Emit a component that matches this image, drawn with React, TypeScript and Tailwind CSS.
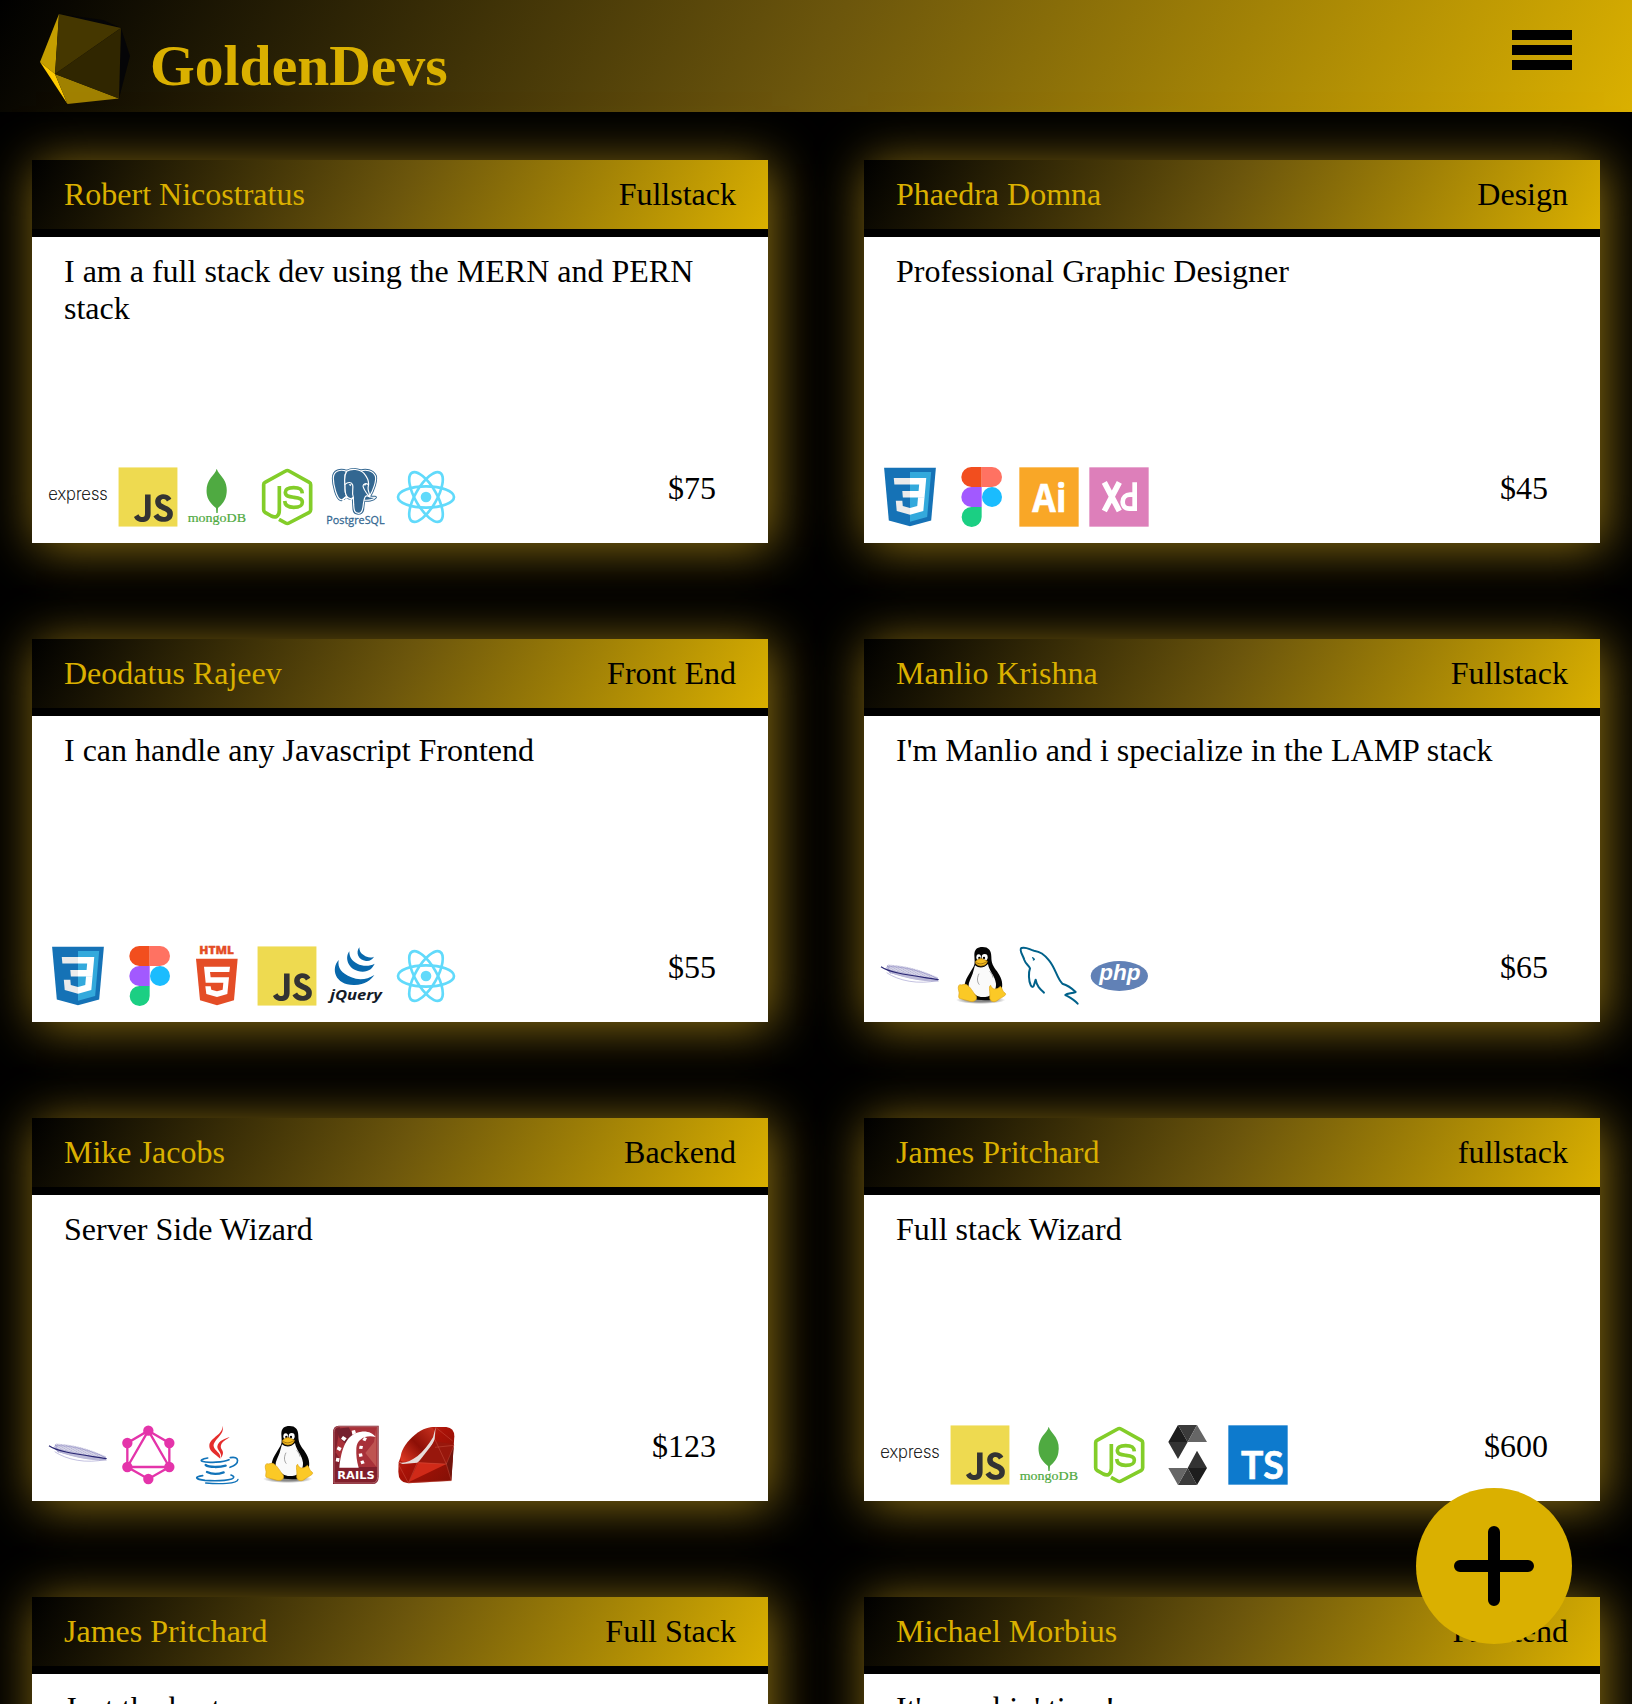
import React from 'react';
import { SiJavascript } from 'react-icons/si';

type SvgProps = { children: React.ReactNode; viewBox?: string };

function Glyph({ children, viewBox = '0 0 180 180' }: SvgProps) {
  return (
    <svg viewBox={viewBox} className="h-[60px] w-[60px] shrink-0 overflow-visible">
      {children}
    </svg>
  );
}

function Express() {
  return (
    <Glyph>
      <text x="1" y="98" fontFamily="Inter" fontWeight="200" fontSize="53" textLength="178" lengthAdjust="spacingAndGlyphs" fill="#000" stroke="#000" strokeWidth="0.6">express</text>
    </Glyph>
  );
}

function JavaScript() {
  return (
    <Glyph>
      <rect x="3" y="3" width="174" height="174" fill="#333" />
      <SiJavascript x="1" y="1" size={178} color="#eeda50" />
    </Glyph>
  );
}

function MongoDB() {
  return (
    <Glyph>
      <path fill="#4faa41" d="M89 5C93 17 101 23 110 37C119 51 121 68 118 83C115 101 104 113 93 123L92 138H88L87 123C75 113 64 103 60 85C56 64 61 47 71 33C78 23 87 15 89 5Z" />
      <text x="2" y="165" fontFamily="Liberation Serif" fontSize="38" textLength="175" lengthAdjust="spacingAndGlyphs" fill="#4faa41" stroke="#4faa41" strokeWidth="0.6">mongoDB</text>
    </Glyph>
  );
}

function NodeJs() {
  return (
    <Glyph>
      <g fill="none" stroke="#83cd29" strokeWidth="11" strokeLinejoin="round">
        <path d="M67 57V130C67 149 55 153 43 147L24 136Q20 133 20 128V53Q20 48 24 46L86 12Q91 9 96 12L157 46Q161 48 161 53V128Q161 133 157 136L96 168Q91 171 86 168L66 157" />
        <path d="M136 79C135 65 126 62 110 62C93 62 85 67 85 76C85 88 96 89 111 91C129 93 136 96 136 106C136 118 127 121 110 121C92 121 84 115 83 102" />
      </g>
    </Glyph>
  );
}

function Postgres() {
  return (
    <Glyph>
      <g fill="#336791" stroke="#336791" strokeWidth="9" strokeLinejoin="round">
        <path d="M62 13C44 6 22 10 22 34C22 54 32 94 44 98C50 100 57 92 62 87C70 96 77 95 82 95L84 128C86 143 107 142 110 128L113 99C125 101 142 99 148 91C141 91 134 91 130 89C142 70 152 40 148 27C140 10 119 7 105 12C93 7 76 6 62 13Z" />
      </g>
      <g fill="#336791" stroke="#fff" strokeWidth="3.5" strokeLinejoin="round" strokeLinecap="round">
        <path d="M62 13C44 6 22 10 22 34C22 54 32 94 44 98C50 100 57 92 62 87C55 77 58 64 57 54C55 38 54 25 62 13Z" />
        <path d="M105 12C119 7 140 10 148 27C152 40 142 70 130 89C134 91 141 91 148 91C142 99 125 101 113 99" />
        <path d="M62 13C76 4 101 5 114 19C124 31 130 45 127 57C123 73 133 77 130 89C115 80 114 99 112 111C111 126 109 139 98 139C83 139 84 124 83 113L82 91C76 96 66 96 62 87C55 77 58 64 57 54C55 38 54 25 62 13Z" />
        <path fill="none" d="M57 52C66 44 77 45 80 54C83 67 76 77 82 91M66 91C60 91 53 94 50 100C61 105 75 102 82 92M127 53C120 47 112 50 111 57C113 69 122 79 130 89" />
        <path fill="#fff" stroke="none" d="M68 52l9 0-4 6zM113 52l8-1-4 6z" />
      </g>
      <text x="1" y="170" fontFamily="Open Sans" fontSize="34" textLength="175" lengthAdjust="spacingAndGlyphs" fill="#336791" stroke="#336791" strokeWidth="0.8">PostgreSQL</text>
    </Glyph>
  );
}

function ReactLogo() {
  return (
    <Glyph>
      <g fill="none" stroke="#61dafb" strokeWidth="8">
        <ellipse cx="90" cy="90" rx="84" ry="32" />
        <ellipse cx="90" cy="90" rx="84" ry="32" transform="rotate(60 90 90)" />
        <ellipse cx="90" cy="90" rx="84" ry="32" transform="rotate(120 90 90)" />
      </g>
      <circle cx="90" cy="90" r="16" fill="#61dafb" />
    </Glyph>
  );
}

function Css3() {
  return (
    <Glyph viewBox="0 0 128 128">
      <path fill="#1572b6" d="M18.814 114.123L8.76 1.352h110.48l-10.064 112.754-45.243 12.543z" />
      <path fill="#33a9dc" d="M64 117.062l36.559-10.136 8.601-96.354H64z" />
      <path fill="#fff" d="M64 51.429h18.302l1.264-14.163H64V23.435h34.682l-.332 3.711-3.4 38.114H64z" />
      <path fill="#ebebeb" d="M64.083 87.349l-.061.018-15.403-4.159-.985-11.031H33.752l1.937 21.717 28.331 7.863.063-.018z" />
      <path fill="#fff" d="M81.127 64.675l-1.666 18.522-15.426 4.164v14.39l28.354-7.858.208-2.337 2.406-26.881z" />
      <path fill="#ebebeb" d="M64.048 23.435v13.831H30.64l-.277-3.108-.63-7.012-.331-3.711zM64 51.431v13.831H48.792l-.277-3.108-.631-7.012-.33-3.711z" />
    </Glyph>
  );
}

function Figma() {
  return (
    <Glyph>
      <path fill="#f24e1e" d="M95 0H64a30 30 0 0 0 0 60h31z" />
      <path fill="#ff7262" d="M95 0h31a30 30 0 0 1 0 60H95z" />
      <path fill="#a259ff" d="M95 60H64a30 30 0 0 0 0 60h31z" />
      <circle cx="126" cy="90" r="30" fill="#1abcfe" />
      <path fill="#1bcf83" d="M95 120H64a30 30 0 1 0 31 30z" />
    </Glyph>
  );
}

function Illustrator() {
  return (
    <Glyph>
      <rect x="1" y="1" width="178" height="178" fill="#f9a727" />
      <text x="40" y="134" fontFamily="Open Sans" fontWeight="700" fontSize="119" textLength="102" lengthAdjust="spacingAndGlyphs" fill="#fff" stroke="#fff" strokeWidth="2">Ai</text>
    </Glyph>
  );
}

function AdobeXd() {
  return (
    <Glyph>
      <rect x="1" y="1" width="178" height="178" fill="#dd7fba" />
      <g fill="none" stroke="#fff">
        <path strokeWidth="17" d="M46 46L91 132M91 46L46 132" />
        <path strokeWidth="14" d="M137 46V125H121C106 125 101 115 101 105C101 91 110 83 123 83H137" />
      </g>
    </Glyph>
  );
}

function Html5() {
  return (
    <Glyph>
      <text x="37" y="25" fontFamily="Open Sans" fontWeight="800" fontSize="31" textLength="104" lengthAdjust="spacingAndGlyphs" fill="#e44d26" stroke="#e44d26" strokeWidth="1">HTML</text>
      <path fill="#e44d26" d="M27 38H152L141 163L90 178L39 163Z" />
      <path fill="#fff" d="M51 62H129L127 78H69L71 94H126L121 144L90 153L58 144L55 121H71L73 131L90 136L107 131L109 110H56Z" />
    </Glyph>
  );
}

function JQuery() {
  return (
    <Glyph>
      <g fill="#0868ac">
        <path d="M38 42C14 68 27 117 83 117C116 118 135 101 145 87C124 101 98 104 76 94C47 82 34 66 38 42Z" />
        <path d="M70 16C53 39 70 77 110 77C129 77 140 66 146 53C130 62 109 61 94 53C77 44 70 34 70 16Z" />
        <path d="M100 4C88 20 97 43 120 45C132 46 139 40 144 32C133 37 122 34 114 28C104 22 100 15 100 4Z" />
      </g>
      <text x="12" y="162" fontFamily="Open Sans" fontStyle="italic" fontWeight="700" fontSize="45" textLength="156" lengthAdjust="spacingAndGlyphs" fill="#131b28">jQuery</text>
    </Glyph>
  );
}

const barbs = Array.from({ length: 42 }, (_, i) => {
  const t = i / 41;
  const x = 18 + t * 150;
  const y = 68 + t * 32;
  const w = 6 + 13 * Math.sin(Math.PI * Math.min(1, t * 0.75 + 0.22));
  return `M${x} ${y}l${w * 0.55} ${-w * 0.85}M${x} ${y}l${w * 0.9} ${w * 0.95}`;
}).join('');

function Apache() {
  return (
    <Glyph>
      <path d={barbs} fill="none" stroke="#6f6bab" strokeWidth="1.5" />
      <path d="M22 62C65 60 126 75 174 98M20 80C55 104 115 117 174 103M22 58L32 83" fill="none" stroke="#8783c0" strokeWidth="1.5" />
      <path d="M3 62C30 81 86 87 176 101" fill="none" stroke="#282572" strokeWidth="3.5" />
    </Glyph>
  );
}

function Tux() {
  return (
    <Glyph>
      <defs>
        <radialGradient id="tux-shade"><stop offset="0.5" stopColor="#888" /><stop offset="1" stopColor="#888" stopOpacity="0" /></radialGradient>
      </defs>
      <ellipse cx="92" cy="162" rx="74" ry="12" fill="url(#tux-shade)" />
      <path fill="#050505" d="M73 27C73 10 82 3 98 3C115 3 124 13 124 32C124 51 129 60 141 76C153 94 159 108 156 126L145 158C126 164 83 165 66 157L44 125C43 105 53 92 61 78C69 66 75 57 74 46Z" />
      <path fill="#fafafa" d="M75 58C88 68 101 67 114 54C116 73 135 89 138 113C139 132 128 151 106 153C83 155 75 148 61 133C47 117 66 95 70 76Z" />
      <ellipse cx="86" cy="34" rx="7" ry="9" fill="#fff" /><ellipse cx="104" cy="34" rx="9" ry="10" fill="#fff" />
      <circle cx="88" cy="36" r="3.5" /><circle cx="102" cy="36" r="3.5" />
      <path fill="#f6bd20" stroke="#ad7708" strokeWidth="2" d="M76 47C82 41 89 37 96 38L112 45C112 56 98 62 88 59C81 57 75 53 76 47Z" />
      <path fill="none" stroke="#744e04" strokeWidth="2" d="M79 49C90 58 102 52 110 47" />
      <path fill="#fbc926" stroke="#dda316" strokeWidth="2" d="M29 116C39 119 42 112 50 116C62 123 68 138 78 149C84 161 73 168 60 166L28 157C23 153 30 142 26 134C24 125 24 120 29 116Z" />
      <path fill="#fbc926" stroke="#dda316" strokeWidth="2" d="M122 118C126 132 140 133 151 121C159 129 155 134 166 142C171 149 155 153 141 164C131 171 119 165 119 155C122 140 114 121 122 118Z" />
      <path fill="none" stroke="#777" strokeWidth="2" d="M87 83C79 99 83 110 88 116M119 76C124 82 128 87 129 95" />
    </Glyph>
  );
}

function MySql() {
  return (
    <Glyph>
      <g fill="none" stroke="#00618a" strokeWidth="6" strokeLinejoin="round" strokeLinecap="round">
        <path d="M176 173C166 161 154 155 139 147C145 141 158 143 170 138C158 126 145 117 130 113C113 95 110 67 90 43C74 24 64 17 45 14C31 11 22 1 7 6C-1 13 13 29 16 42C21 56 29 57 33 67C28 80 29 104 35 117C38 123 43 126 45 117L50 101C53 120 63 129 75 140" />
        <path d="M41 35L46 40L43 42" strokeWidth="4" />
      </g>
    </Glyph>
  );
}

function Php() {
  return (
    <Glyph>
      <ellipse cx="91" cy="90" rx="86" ry="45" fill="#6181b6" />
      <text x="31" y="102" fontFamily="Liberation Sans" fontStyle="italic" fontWeight="700" fontSize="66" textLength="124" lengthAdjust="spacingAndGlyphs" fill="#fff">php</text>
    </Glyph>
  );
}

const graphNodes = [[91, 17], [154, 54], [154, 126], [91, 162], [28, 126], [28, 54]];

function GraphQL() {
  return (
    <Glyph>
      <g fill="none" stroke="#e434aa" strokeWidth="7">
        <path d="M91 17L154 54V126L91 162L28 126V54ZM91 17L154 126H28Z" />
      </g>
      {graphNodes.map(([x, y]) => <circle key={`${x}-${y}`} cx={x} cy={y} r="15.5" fill="#e434aa" />)}
    </Glyph>
  );
}

function Java() {
  return (
    <Glyph>
      <g fill="#e52d2c">
        <path d="M106 2C116 28 78 43 80 64C82 78 103 83 100 101C83 86 65 78 67 60C70 37 110 28 106 2Z" />
        <path d="M128 37C108 49 99 57 102 69C105 76 114 83 102 98C105 83 90 76 91 64C94 47 117 39 128 37Z" />
      </g>
      <g fill="none" stroke="#1173b9" strokeLinecap="round" strokeLinejoin="round">
        <path strokeWidth="5" d="M62 99C45 102 39 106 45 109C62 115 112 111 126 104M130 98C157 92 161 116 129 127" />
        <path strokeWidth="7" d="M56 120C66 128 99 127 116 122M60 141C76 149 96 147 110 142" />
        <path strokeWidth="5" d="M47 152C20 155 25 163 54 166C93 169 140 166 140 157C141 153 135 151 132 150" />
        <path strokeWidth="4" d="M56 174C96 178 151 177 153 163" />
      </g>
    </Glyph>
  );
}

function Rails() {
  return (
    <Glyph>
      <path fill="#811f2c" d="M38 2H158V155Q158 177 139 177H21V23Q21 2 38 2Z" />
      <path fill="#a83139" d="M42 6H154V126H58L29 82Z" />
      <path fill="#75202e" d="M30 12L68 7L85 38L62 60L40 38Z" />
      <path fill="#c9675d" d="M151 7V125L118 84L144 51Z" opacity=".65" />
      <path fill="none" stroke="#c78788" strokeWidth="2" d="M39 5H155V154Q155 174 138 174H24V23Q24 5 39 5Z" />
      <path fill="#fff" d="M40 128C46 71 61 25 106 20C127 18 140 25 149 36C120 28 93 42 91 69C90 91 92 108 98 128Z" />
      <g fill="#fff"><path d="M31 98l10 2-2 11-10-2zM36 64l11 5-5 10-10-6zM51 33l11 7-7 9-10-8zM77 17l10-2 3 10-11 4zM115 36l8 4-5 9-9-4zM101 62l10 1-2 9-10-1zM98 86l10-1 2 9-10 2zM103 109l9-3 4 9-10 3z" /></g>
      <text x="34" y="161" fontFamily="DejaVu Sans" fontWeight="700" fontSize="33" textLength="112" lengthAdjust="spacingAndGlyphs" fill="#fff">RAILS</text>
    </Glyph>
  );
}

function Ruby() {
  return (
    <Glyph>
      <defs>
        <linearGradient id="ruby-face" x1="0" y1="0" x2="1" y2="1"><stop stopColor="#d83a26" /><stop offset=".45" stopColor="#a81207" /><stop offset="1" stopColor="#801006" /></linearGradient>
        <linearGradient id="ruby-table" x1="0" y1="1" x2="1" y2="0"><stop stopColor="#e33b25" /><stop offset=".5" stopColor="#8d0f06" /><stop offset="1" stopColor="#c8301e" /></linearGradient>
      </defs>
      <path fill="url(#ruby-face)" d="M109 6H151Q175 9 175 34L166 167L37 175Q7 173 7 140L8 112C23 66 61 19 109 6Z" />
      <path fill="url(#ruby-table)" d="M15 107C5 71 65 7 108 7C129 27 86 78 60 98C43 109 24 114 15 107Z" />
      <path fill="#e6ddda" d="M7 112C37 120 81 90 111 37L119 6L116 43C101 78 84 99 64 113L20 117Z" />
      <path fill="#98170c" d="M67 112L116 49L174 58L150 116Z" />
      <path fill="#d02a18" d="M67 112L151 117L39 171Z" />
      <path fill="#71140c" d="M151 117L173 64L166 167Z" />
      <path fill="none" stroke="#d5604f" strokeWidth="1.2" d="M8 119L37 174L64 113L151 117L166 167L39 173M117 44L151 117L174 61L117 67M119 7L170 48" />
    </Glyph>
  );
}

function Solidity() {
  return (
    <Glyph>
      <path fill="#1d1d1d" d="M60 0L89 51H31ZM89 129H147L117 180Z" />
      <path fill="#3b3b3b" d="M60 0H117L89 51ZM60 180L89 129L117 180Z" />
      <path fill="#666" d="M117 0L147 51H89ZM31 129H89L60 180Z" />
      <path fill="#333" d="M31 51H89L60 102ZM117 77L147 129H89Z" />
    </Glyph>
  );
}

function TypeScript() {
  return (
    <Glyph>
      <rect x="1" y="1" width="178" height="178" fill="#0d7acd" />
      <text x="39" y="162" fontFamily="Lato" fontWeight="700" fontSize="112" textLength="128" lengthAdjust="spacingAndGlyphs" fill="#fff" stroke="#fff" strokeWidth="2">TS</text>
    </Glyph>
  );
}

const icons = {
  express: Express, javascript: JavaScript, mongodb: MongoDB, node: NodeJs, postgres: Postgres,
  react: ReactLogo, css3: Css3, figma: Figma, illustrator: Illustrator, xd: AdobeXd, html5: Html5,
  jquery: JQuery, apache: Apache, linux: Tux, mysql: MySql, php: Php, graphql: GraphQL, java: Java,
  rails: Rails, ruby: Ruby, solidity: Solidity, typescript: TypeScript,
};

type Dev = { name: string; role: string; bio: string; rate: string; stack: (keyof typeof icons)[] };

const devs: Dev[] = [
  { name: 'Robert Nicostratus', role: 'Fullstack', bio: 'I am a full stack dev using the MERN and PERN stack', rate: '$75', stack: ['express', 'javascript', 'mongodb', 'node', 'postgres', 'react'] },
  { name: 'Phaedra Domna', role: 'Design', bio: 'Professional Graphic Designer', rate: '$45', stack: ['css3', 'figma', 'illustrator', 'xd'] },
  { name: 'Deodatus Rajeev', role: 'Front End', bio: 'I can handle any Javascript Frontend', rate: '$55', stack: ['css3', 'figma', 'html5', 'javascript', 'jquery', 'react'] },
  { name: 'Manlio Krishna', role: 'Fullstack', bio: "I'm Manlio and i specialize in the LAMP stack", rate: '$65', stack: ['apache', 'linux', 'mysql', 'php'] },
  { name: 'Mike Jacobs', role: 'Backend', bio: 'Server Side Wizard', rate: '$123', stack: ['apache', 'graphql', 'java', 'linux', 'rails', 'ruby'] },
  { name: 'James Pritchard', role: 'fullstack', bio: 'Full stack Wizard', rate: '$600', stack: ['express', 'javascript', 'mongodb', 'node', 'solidity', 'typescript'] },
  { name: 'James Pritchard', role: 'Full Stack', bio: 'Just the best', rate: '', stack: [] },
  { name: 'Michael Morbius', role: 'Frontend', bio: "It's morbin' time!", rate: '', stack: [] },
];

function DevCard({ dev }: { dev: Dev }) {
  return (
    <article className="flex h-[383px] flex-col bg-white shadow-[4px_4px_48px_rgba(212,168,26,0.68)]">
      <header className="flex h-[77px] shrink-0 justify-between border-b-8 border-black bg-[linear-gradient(120deg,#000,#6c560c_50%,#dab000)] px-8 py-4">
        <h2 className="text-[#dab000]">{dev.name}</h2>
        <span>{dev.role}</span>
      </header>
      <p className="px-8 pt-4">{dev.bio}</p>
      <footer className="mt-auto flex items-start justify-between pr-[52px] pb-4 pl-4">
        <div className="flex gap-[9.6px]">
          {dev.stack.map((key) => {
            const Icon = icons[key];
            return <Icon key={key} />;
          })}
        </div>
        <span className="pt-[3px]">{dev.rate}</span>
      </footer>
    </article>
  );
}

function Logo() {
  return (
    <svg viewBox="40 14 90 90" className="h-[90px] w-[90px]">
      <path fill="#050507" d="M59 14L103 20L121 28L130 56L119 98.500Z" />
      <path fill="#c49e00" d="M59 14L40 62L55 74Z" />
      <path fill="#ffcb00" d="M40 62L55 74L67.500 104Z" />
      <path fill="#a08100" d="M55 74L119 98.500L67.500 104Z" />
      <path fill="#453700" d="M59 14L121 28L55 74Z" />
      <path fill="#302600" d="M121 28L119 98.500L55 74Z" />
    </svg>
  );
}

export default function App() {
  return (
    <div className="h-[1704px] overflow-hidden bg-black font-['Liberation_Serif',serif] text-[32px] leading-[37px] text-black">
      <header className="flex h-28 items-start justify-between bg-[linear-gradient(120deg,#000,#6c560c_50%,#dab000)] pr-[60px] pl-10">
        <div className="flex items-start gap-5 pt-[14px]">
          <Logo />
          <h1 className="pt-[19px] text-[57.6px] leading-[66px] font-bold text-[#dab000]">GoldenDevs</h1>
        </div>
        <button aria-label="Menu" className="flex flex-col gap-[5.400px] pt-[30.200px]">
          <span className="h-[9.600px] w-[60px] bg-black" />
          <span className="h-[9.600px] w-[60px] bg-black" />
          <span className="h-[9.600px] w-[60px] bg-black" />
        </button>
      </header>
      <main className="grid grid-cols-2 gap-24 px-8 pt-12">
        {devs.map((dev, i) => <DevCard key={i} dev={dev} />)}
      </main>
      <button aria-label="Add" className="fixed right-[60px] bottom-[60px] flex h-[156px] w-[156px] items-center justify-center rounded-full bg-[#dab000]">
        <svg viewBox="0 0 80 80" className="h-20 w-20">
          <path d="M40 6V74M6 40H74" stroke="#000" strokeWidth="12" strokeLinecap="round" />
        </svg>
      </button>
    </div>
  );
}
